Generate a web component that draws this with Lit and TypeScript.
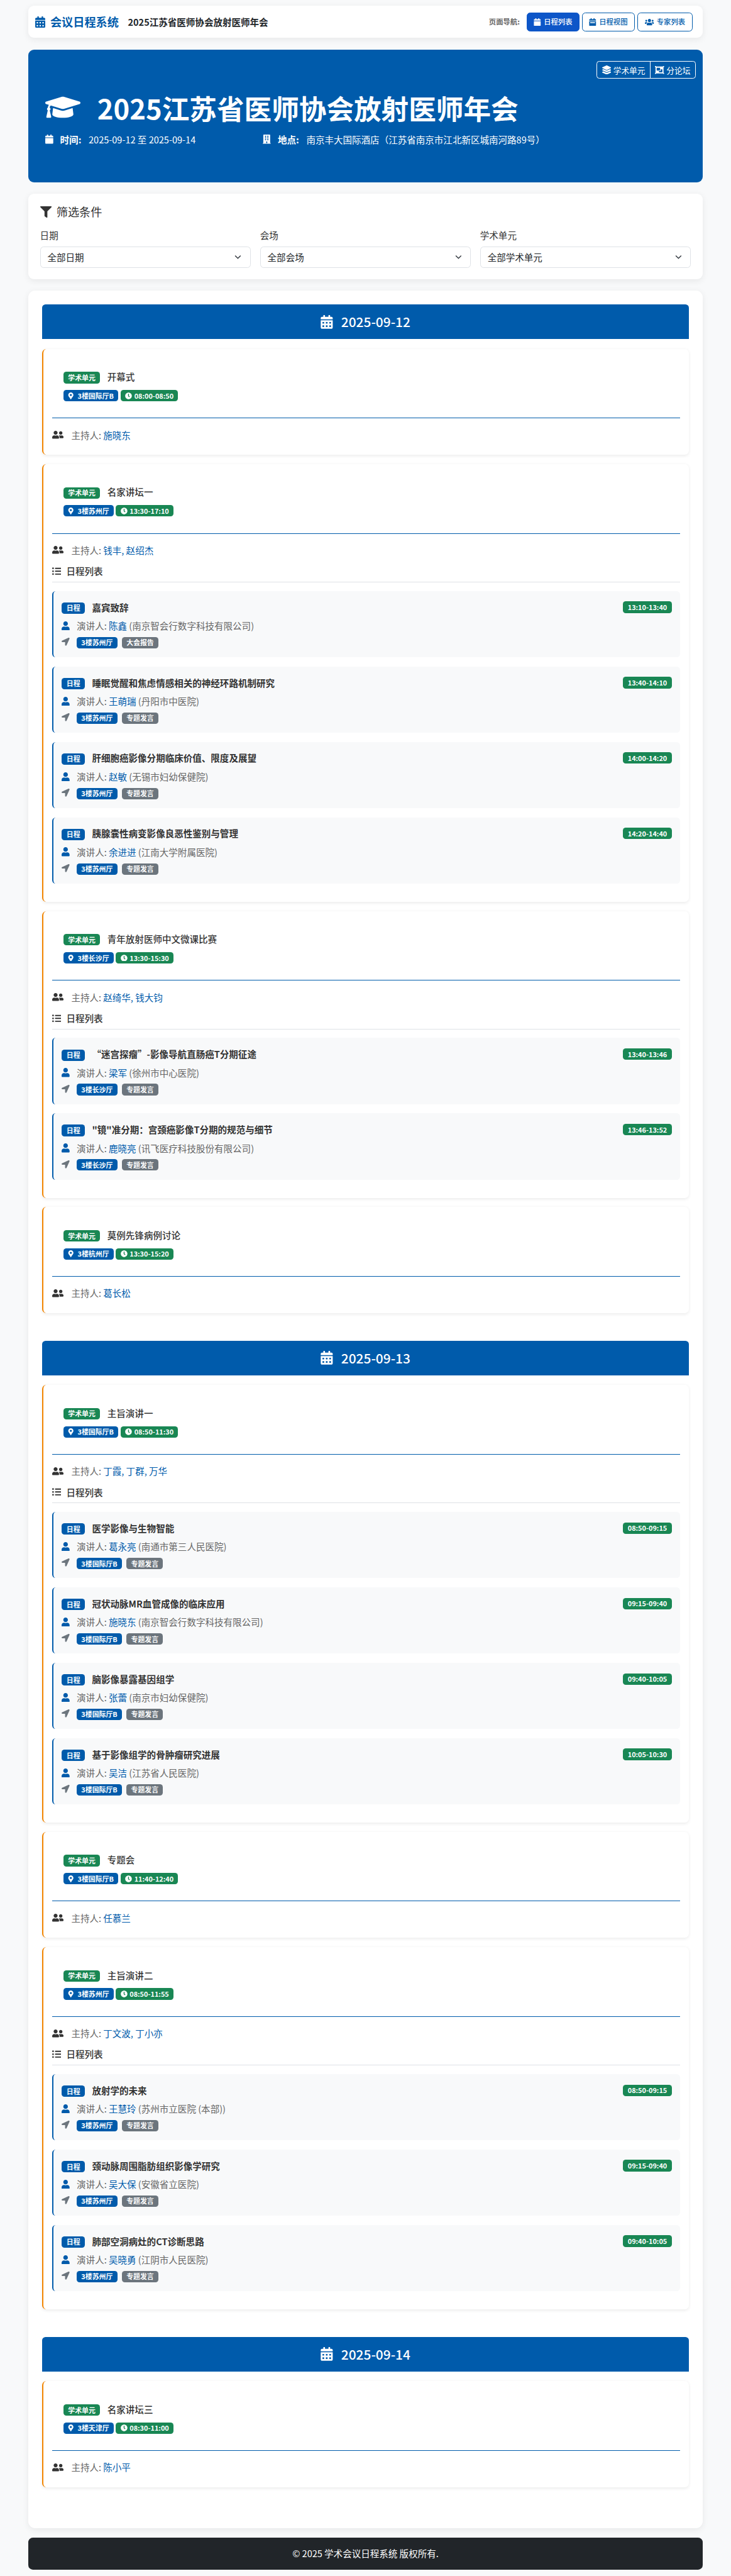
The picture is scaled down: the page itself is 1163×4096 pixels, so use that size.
import { LitElement, html, css } from "lit";
import { customElement } from "lit/decorators.js";

const P: Record<string, [string, string]> = {
  calAlt: ["0 0 448 512", "M0 464c0 26.5 21.5 48 48 48h352c26.5 0 48-21.5 48-48V192H0v272zm320-196c0-6.6 5.4-12 12-12h40c6.6 0 12 5.4 12 12v40c0 6.6-5.4 12-12 12h-40c-6.6 0-12-5.4-12-12v-40zm0 128c0-6.6 5.4-12 12-12h40c6.6 0 12 5.4 12 12v40c0 6.6-5.4 12-12 12h-40c-6.6 0-12-5.4-12-12v-40zM192 268c0-6.6 5.4-12 12-12h40c6.6 0 12 5.4 12 12v40c0 6.6-5.4 12-12 12h-40c-6.6 0-12-5.4-12-12v-40zm0 128c0-6.6 5.4-12 12-12h40c6.6 0 12 5.4 12 12v40c0 6.6-5.4 12-12 12h-40c-6.6 0-12-5.4-12-12v-40zM64 268c0-6.6 5.4-12 12-12h40c6.6 0 12 5.4 12 12v40c0 6.6-5.4 12-12 12H76c-6.6 0-12-5.4-12-12v-40zm0 128c0-6.6 5.4-12 12-12h40c6.6 0 12 5.4 12 12v40c0 6.6-5.4 12-12 12H76c-6.6 0-12-5.4-12-12v-40zM400 64h-48V16c0-8.8-7.2-16-16-16h-32c-8.8 0-16 7.2-16 16v48H160V16c0-8.8-7.2-16-16-16h-32c-8.8 0-16 7.2-16 16v48H48C21.5 64 0 85.5 0 112v48h448v-48c0-26.5-21.5-48-48-48z"],
  cal: ["0 0 448 512", "M12 192h424c6.6 0 12 5.4 12 12v260c0 26.5-21.5 48-48 48H48c-26.5 0-48-21.5-48-48V204c0-6.6 5.4-12 12-12zm436-44v-36c0-26.5-21.5-48-48-48h-48V12c0-6.6-5.4-12-12-12h-40c-6.6 0-12 5.4-12 12v52H160V12c0-6.6-5.4-12-12-12h-40c-6.6 0-12 5.4-12 12v52H48C21.5 64 0 85.5 0 112v36c0 6.6 5.4 12 12 12h424c6.6 0 12-5.4 12-12z"],
  calWeek: ["0 0 448 512", "M448 148v-36c0-26.5-21.5-48-48-48h-48V12c0-6.6-5.4-12-12-12h-40c-6.6 0-12 5.4-12 12v52H160V12c0-6.6-5.4-12-12-12h-40c-6.6 0-12 5.4-12 12v52H48C21.5 64 0 85.5 0 112v36c0 6.6 5.4 12 12 12h424c6.6 0 12-5.4 12-12zM0 192v272c0 26.5 21.5 48 48 48h352c26.5 0 48-21.5 48-48V192H0zm384 128H64v-64h320v64z"],
  cap: ["0 0 640 512", "M622.34 153.2L343.4 67.5c-15.2-4.67-31.6-4.67-46.79 0L17.66 153.2c-23.54 7.23-23.54 38.36 0 45.59l48.63 14.94c-10.67 13.19-17.23 29.28-17.88 46.9C38.78 266.15 32 276.11 32 288c0 10.78 5.68 19.85 13.86 25.65L20.33 428.53C18.11 438.52 25.71 448 35.94 448h56.11c10.24 0 17.84-9.48 15.62-19.47L82.14 313.65C90.32 307.85 96 298.78 96 288c0-11.57-6.47-21.25-15.66-26.87.76-15.02 8.44-28.3 20.69-36.72L296.6 284.5c9.06 2.78 26.44 6.25 46.79 0l278.95-85.7c23.55-7.24 23.55-38.36 0-45.6zM352.79 315.09c-28.53 8.76-52.84 3.92-65.59 0l-145.02-44.55L128 384c0 35.35 85.96 64 192 64s192-28.65 192-64l-14.18-113.47-145.03 44.56z"],
  user: ["0 0 448 512", "M224 256c70.7 0 128-57.3 128-128S294.7 0 224 0 96 57.3 96 128s57.3 128 128 128zm89.6 32h-16.7c-22.2 10.2-46.9 16-72.9 16s-50.6-5.8-72.9-16h-16.7C60.2 288 0 348.2 0 422.4V464c0 26.5 21.5 48 48 48h352c26.5 0 48-21.5 48-48v-41.6c0-74.2-60.2-134.4-134.4-134.4z"],
  friends: ["0 0 640 512", "M192 256c61.9 0 112-50.1 112-112S253.9 32 192 32 80 82.1 80 144s50.1 112 112 112zm76.8 32h-8.3c-20.8 10-43.9 16-68.5 16s-47.6-6-68.5-16h-8.3C51.6 288 0 339.6 0 403.2V432c0 26.5 21.5 48 48 48h288c26.5 0 48-21.5 48-48v-28.8c0-63.6-51.6-115.2-115.2-115.2zM480 256c53 0 96-43 96-96s-43-96-96-96-96 43-96 96 43 96 96 96zm48 32h-3.8c-13.9 4.8-28.6 8-44.2 8s-30.3-3.2-44.2-8H432c-20.4 0-39.2 5.9-55.7 15.4 24.4 26.3 39.7 61.2 39.7 99.8v38.4c0 2.2-.5 4.3-.6 6.4H592c26.5 0 48-21.5 48-48 0-61.9-50.1-112-112-112z"],
  users: ["0 0 640 512", "M96 224c35.3 0 64-28.7 64-64s-28.7-64-64-64-64 28.7-64 64 28.7 64 64 64zm448 0c35.3 0 64-28.7 64-64s-28.7-64-64-64-64 28.7-64 64 28.7 64 64 64zm32 32h-64c-17.6 0-33.5 7.1-45.1 18.6 40.3 22.1 68.9 62 75.1 109.4h66c17.7 0 32-14.3 32-32v-32c0-35.3-28.7-64-64-64zm-256 0c61.9 0 112-50.1 112-112S381.9 32 320 32 208 82.1 208 144s50.1 112 112 112zm76.8 32h-8.3c-20.8 10-43.9 16-68.5 16s-47.6-6-68.5-16h-8.3C179.6 288 128 339.6 128 403.2V432c0 26.5 21.5 48 48 48h288c26.5 0 48-21.5 48-48v-28.8c0-63.6-51.6-115.2-115.2-115.2zm-223.7-13.4C161.5 263.1 145.6 256 128 256H64c-35.3 0-64 28.7-64 64v32c0 17.7 14.3 32 32 32h65.9c6.3-47.4 34.9-87.3 75.2-109.4z"],
  filter: ["0 0 512 512", "M487.976 0H24.028C2.71 0-8.047 25.866 7.058 40.971L192 225.941V432c0 7.831 3.821 15.17 10.237 19.662l80 55.98C298.02 518.69 320 507.493 320 487.98V225.941l184.947-184.97C520.021 25.896 509.338 0 487.976 0z"],
  marker: ["0 0 384 512", "M172.268 501.67C26.97 291.031 0 256.528 0 192 0 85.961 85.961 0 192 0s192 85.961 192 192c0 64.528-26.97 99.031-172.268 309.67-9.535 13.774-29.93 13.773-39.464 0zM192 272c44.183 0 80-35.817 80-80s-35.817-80-80-80-80 35.817-80 80 35.817 80 80 80z"],
  clock: ["0 0 512 512", "M256,8C119,8,8,119,8,256S119,504,256,504,504,393,504,256,393,8,256,8Zm92.49,313h0l-20,25a16,16,0,0,1-22.49,2.5h0l-67-49.72a40,40,0,0,1-15-31.23V112a16,16,0,0,1,16-16h32a16,16,0,0,1,16,16V256l58,42.5A16,16,0,0,1,348.49,321Z"],
  arrow: ["0 0 512 512", "M444.52 3.52L28.74 195.42c-47.97 22.39-31.98 92.75 19.19 92.75h175.91v175.91c0 51.17 70.36 67.17 92.75 19.19l191.9-415.78c15.99-38.39-25.59-79.97-63.97-63.97z"],
  list: ["0 0 512 512", "M48 48a48 48 0 1 0 48 48 48 48 0 0 0-48-48zm0 160a48 48 0 1 0 48 48 48 48 0 0 0-48-48zm0 160a48 48 0 1 0 48 48 48 48 0 0 0-48-48zm448 16H176a16 16 0 0 0-16 16v32a16 16 0 0 0 16 16h320a16 16 0 0 0 16-16v-32a16 16 0 0 0-16-16zm0-320H176a16 16 0 0 0-16 16v32a16 16 0 0 0 16 16h320a16 16 0 0 0 16-16V80a16 16 0 0 0-16-16zm0 160H176a16 16 0 0 0-16 16v32a16 16 0 0 0 16 16h320a16 16 0 0 0 16-16v-32a16 16 0 0 0-16-16z"],
  building: ["0 0 448 512", "M436 480h-20V24c0-13.255-10.745-24-24-24H56C42.745 0 32 10.745 32 24v456H12c-6.627 0-12 5.373-12 12v20h448v-20c0-6.627-5.373-12-12-12zM128 76c0-6.627 5.373-12 12-12h40c6.627 0 12 5.373 12 12v40c0 6.627-5.373 12-12 12h-40c-6.627 0-12-5.373-12-12V76zm0 96c0-6.627 5.373-12 12-12h40c6.627 0 12 5.373 12 12v40c0 6.627-5.373 12-12 12h-40c-6.627 0-12-5.373-12-12v-40zm52 148h-40c-6.627 0-12-5.373-12-12v-40c0-6.627 5.373-12 12-12h40c6.627 0 12 5.373 12 12v40c0 6.627-5.373 12-12 12zm76 160h-64v-84c0-6.627 5.373-12 12-12h40c6.627 0 12 5.373 12 12v84zm64-172c0 6.627-5.373 12-12 12h-40c-6.627 0-12-5.373-12-12v-40c0-6.627 5.373-12 12-12h40c6.627 0 12 5.373 12 12v40zm0-96c0 6.627-5.373 12-12 12h-40c-6.627 0-12-5.373-12-12v-40c0-6.627 5.373-12 12-12h40c6.627 0 12 5.373 12 12v40zm0-96c0 6.627-5.373 12-12 12h-40c-6.627 0-12-5.373-12-12V76c0-6.627 5.373-12 12-12h40c6.627 0 12 5.373 12 12v40z"],
  layers: ["0 0 512 512", "M12.41 148.02l232.94 105.67c6.8 3.09 14.49 3.09 21.29 0l232.94-105.67c16.55-7.51 16.55-32.52 0-40.03L266.65 2.31a25.607 25.607 0 0 0-21.29 0L12.41 107.98c-16.55 7.51-16.55 32.53 0 40.04zm487.18 88.28l-58.09-26.33-161.64 73.27c-7.56 3.43-15.59 5.17-23.86 5.17s-16.29-1.74-23.86-5.17L70.51 209.97l-58.1 26.33c-16.55 7.5-16.55 32.5 0 40l232.94 105.59c6.8 3.08 14.49 3.08 21.29 0L499.59 276.3c16.55-7.5 16.55-32.5 0-40zm0 127.8l-57.87-26.23-161.86 73.37c-7.56 3.43-15.59 5.17-23.86 5.17s-16.29-1.74-23.86-5.17L70.29 337.87 12.41 364.1c-16.55 7.5-16.55 32.5 0 40l232.94 105.59c6.8 3.08 14.49 3.08 21.29 0L499.59 404.1c16.55-7.5 16.55-32.5 0-40z"],
  objects: ["0 0 512 512", "M480 128V96h20c6.627 0 12-5.373 12-12V44c0-6.627-5.373-12-12-12h-40c-6.627 0-12 5.373-12 12v20H64V44c0-6.627-5.373-12-12-12H12C5.373 32 0 37.373 0 44v40c0 6.627 5.373 12 12 12h20v320H12c-6.627 0-12 5.373-12 12v40c0 6.627 5.373 12 12 12h40c6.627 0 12-5.373 12-12v-20h384v20c0 6.627 5.373 12 12 12h40c6.627 0 12-5.373 12-12v-40c0-6.627-5.373-12-12-12h-20V128zM96 276V140c0-6.627 5.373-12 12-12h168c6.627 0 12 5.373 12 12v136c0 6.627-5.373 12-12 12H108c-6.627 0-12-5.373-12-12zm320 96c0 6.627-5.373 12-12 12H236c-6.627 0-12-5.373-12-12v-52h72c13.255 0 24-10.745 24-24v-72h84c6.627 0 12 5.373 12 12v136z"],
};

const ic = (n: string, cls = "") => html`<svg class="ic ${cls}" viewBox=${P[n][0]} aria-hidden="true"><path d=${P[n][1]}></path></svg>`;

type Item = { t: string; time: string; who: string; org: string; kind: string };
type Session = { t: string; room: string; time: string; hosts: string; items?: Item[] };
type Day = { date: string; sessions: Session[] };

const TALK = "专题发言";
const DAYS: Day[] = [
  { date: "2025-09-12", sessions: [
    { t: "开幕式", room: "3楼国际厅B", time: "08:00-08:50", hosts: "施晓东" },
    { t: "名家讲坛一", room: "3楼苏州厅", time: "13:30-17:10", hosts: "钱丰, 赵绍杰", items: [
      { t: "嘉宾致辞", time: "13:10-13:40", who: "陈鑫", org: "南京智会行数字科技有限公司", kind: "大会报告" },
      { t: "睡眠觉醒和焦虑情感相关的神经环路机制研究", time: "13:40-14:10", who: "王萌瑞", org: "丹阳市中医院", kind: TALK },
      { t: "肝细胞癌影像分期临床价值、限度及展望", time: "14:00-14:20", who: "赵敏", org: "无锡市妇幼保健院", kind: TALK },
      { t: "胰腺囊性病变影像良恶性鉴别与管理", time: "14:20-14:40", who: "余进进", org: "江南大学附属医院", kind: TALK },
    ] },
    { t: "青年放射医师中文微课比赛", room: "3楼长沙厅", time: "13:30-15:30", hosts: "赵绮华, 钱大钧", items: [
      { t: "“迷宫探瘤”-影像导航直肠癌T分期征途", time: "13:40-13:46", who: "梁军", org: "徐州市中心医院", kind: TALK },
      { t: "\"镜\"准分期：宫颈癌影像T分期的规范与细节", time: "13:46-13:52", who: "鹿晓亮", org: "讯飞医疗科技股份有限公司", kind: TALK },
    ] },
    { t: "莫例先锋病例讨论", room: "3楼杭州厅", time: "13:30-15:20", hosts: "葛长松" },
  ] },
  { date: "2025-09-13", sessions: [
    { t: "主旨演讲一", room: "3楼国际厅B", time: "08:50-11:30", hosts: "丁霞, 丁群, 万华", items: [
      { t: "医学影像与生物智能", time: "08:50-09:15", who: "葛永亮", org: "南通市第三人民医院", kind: TALK },
      { t: "冠状动脉MR血管成像的临床应用", time: "09:15-09:40", who: "施晓东", org: "南京智会行数字科技有限公司", kind: TALK },
      { t: "脑影像暴露基因组学", time: "09:40-10:05", who: "张蕾", org: "南京市妇幼保健院", kind: TALK },
      { t: "基于影像组学的骨肿瘤研究进展", time: "10:05-10:30", who: "吴洁", org: "江苏省人民医院", kind: TALK },
    ] },
    { t: "专题会", room: "3楼国际厅B", time: "11:40-12:40", hosts: "任慕兰" },
    { t: "主旨演讲二", room: "3楼苏州厅", time: "08:50-11:55", hosts: "丁文波, 丁小亦", items: [
      { t: "放射学的未来", time: "08:50-09:15", who: "王慧玲", org: "苏州市立医院 (本部)", kind: TALK },
      { t: "颈动脉周围脂肪组织影像学研究", time: "09:15-09:40", who: "吴大保", org: "安徽省立医院", kind: TALK },
      { t: "肺部空洞病灶的CT诊断思路", time: "09:40-10:05", who: "吴晓勇", org: "江阴市人民医院", kind: TALK },
    ] },
  ] },
  { date: "2025-09-14", sessions: [
    { t: "名家讲坛三", room: "3楼天津厅", time: "08:30-11:00", hosts: "陈小平" },
  ] },
];

@customElement("app-root")
export class AppRoot extends LitElement {
  static styles = css`
    :host {
      display: block;
      zoom: 0.727;
      background: #f8f9fa;
      color: #333;
      font-family: "Noto Sans CJK SC", "Noto Sans", sans-serif;
      font-size: 20px;
      line-height: 1.5;
    }
    * { box-sizing: border-box; }
    .page { padding: 13px 62.5px 16px; }
    .ic { display: block; fill: currentColor; flex: none; }
    .white { background: #fff; border-radius: 12.5px; box-shadow: 0 3px 14px rgba(0,0,0,.07); }

    .nav { height: 70px; display: flex; align-items: center; padding: 0 21px 0 14.5px; margin-bottom: 26px; }
    .brand { display: flex; align-items: center; color: #005bab; font-size: 25px; font-weight: 700; }
    .brand .ic { width: 22px; height: 25px; margin-right: 11px; }
    .sub { margin-left: 20px; font-size: 20px; font-weight: 700; color: #212529; }
    .navr { margin-left: auto; display: flex; align-items: center; }
    .navl { font-size: 15.6px; font-weight: 700; color: #666; margin-right: 15px; }
    .btn { height: 42px; width: 116px; margin-left: 5px; display: flex; align-items: center; justify-content: center; border: 1.25px solid #005bab; border-radius: 7.5px; color: #005bab; font-size: 15.6px; font-weight: 500; }
    .btn .ic { width: 16px; height: 17px; margin-right: 6px; }
    .btn.on { background: #0d56c8; border-color: #0d56c8; color: #fff; }
    .btn.wide { width: 122px; }
    .btn.wide .ic { width: 20px; }
    .navl + .btn { margin-left: 0; }

    .hero { position: relative; height: 290px; background: #005bab; color: #fff; border-radius: 12.5px; padding: 90px 36.5px 0; margin-bottom: 25px; }
    .htitle { display: flex; align-items: center; height: 72px; font-size: 60px; font-weight: 700; line-height: 1.2; margin: 0 0 19px; }
    .htitle .ic { width: 77px; height: 62px; margin-right: 37px; }
    .hmeta { display: flex; height: 30px; align-items: center; }
    .hmeta > div { display: flex; align-items: center; }
    .hmeta > div:first-child { width: 476.5px; }
    .hmeta .ic { width: 17.5px; height: 20px; margin-right: 15px; }
    .hmeta b { margin-right: 16px; font-weight: 700; }
    .tag { position: absolute; top: 25px; right: 15px; display: flex; height: 38px; border: 1.25px solid #fff; border-radius: 6px; font-size: 17.5px; color: #fff; }
    .tag span { display: flex; align-items: center; padding: 0 10px; }
    .tag span + span { border-left: 1.25px solid #fff; }
    .tag .ic { width: 20px; height: 20px; margin-right: 5px; }

    .filter { height: 187px; padding: 21px 25px 0; margin-bottom: 25px; }
    .ftitle { display: flex; align-items: center; font-size: 25px; height: 37.5px; margin-bottom: 17.5px; }
    .ftitle .ic { width: 25px; height: 25px; margin-right: 11px; }
    .fgrid { display: grid; grid-template-columns: repeat(3, 1fr); gap: 20px; }
    .flabel { height: 30px; margin-bottom: 9px; }
    .sel { height: 47px; display: flex; align-items: center; justify-content: space-between; padding: 0 19px 0 15px; border: 1.25px solid #dee2e6; border-radius: 7.5px; color: #212529; }
    .chev { width: 15px; height: 10px; fill: none; stroke: #343a40; stroke-width: 2; flex: none; }

    .sched { padding: 30px; border-radius: 15px; margin-bottom: 20px; }
    .day { padding-bottom: 40px; }
    .dhead { height: 76px; background: #005bab; color: #fff; border-radius: 7.5px 7.5px 0 0; display: flex; align-items: center; justify-content: center; font-size: 28.75px; font-weight: 500; margin-bottom: 21px; }
    .dhead .ic { width: 27px; height: 30px; margin-right: 18px; }

    .sess { background: #fff; border-left: 3.75px solid #f28500; border-radius: 9px; box-shadow: 0 2px 8px rgba(0,0,0,.08); padding: 18.75px; margin-bottom: 20px; }
    .shead { padding: 31.25px 0 35px 25px; border-bottom: 1.25px solid #005bab; }
    .sline { display: flex; align-items: center; height: 26px; margin-bottom: 14px; }
    .stitle { margin-left: 16px; font-size: 20px; font-weight: 500; color: #333; line-height: 26px; position: relative; top: -1px; }
    .badges { display: flex; height: 26px; gap: 5px; }
    .b { display: inline-flex; align-items: center; height: 25px; padding: 0 10px; border-radius: 6.25px; color: #fff; font-size: 15px; font-weight: 700; line-height: 1; white-space: nowrap; }
    .b.g { background: #198754; }
    .b.bl { background: #005bab; }
    .b.gr { background: #6c757d; }
    .b .ic { width: 13px; height: 15px; margin-right: 8px; }
    .b .ic.ck { width: 15px; margin-right: 5px; }
    .host { display: flex; align-items: center; height: 30px; margin: 21px 0 10px; color: #666; }
    .host .ic { width: 25px; height: 20px; margin-right: 17px; color: #333; }
    .nm { color: #005bab; }
    .ltitle { display: flex; align-items: center; height: 30px; font-weight: 500; }
    .lwrap { padding-bottom: 8px; border-bottom: 1.25px solid #dee2e6; margin: 16px 0 19px; }
    .ltitle .ic { width: 20px; height: 20px; margin-right: 11px; }
    .items { padding-bottom: 1.25px; }

    .item { height: 145px; background: #f8f9fa; border-left: 3.75px solid #005bab; border-radius: 7.5px; padding: 19.5px 18.75px; margin-bottom: 20px; }
    .irow { display: flex; align-items: center; height: 32px; margin-bottom: 9.5px; }
    .irow .b { margin-top: 4px; }
    .ititle { margin-left: 16px; font-weight: 700; color: #333; }
    .irow .b.g { margin-left: auto; margin-top: 0; }
    .spk { display: flex; align-items: center; height: 30px; margin-bottom: 9.5px; color: #666; }
    .spk .ic { width: 17.5px; height: 20px; margin-right: 15px; color: #005bab; }
    .tags { display: flex; align-items: center; height: 25px; }
    .tags > .ic { width: 17.5px; height: 20px; margin-right: 15px; color: #6c757d; margin-top: -4px; }
    .tags .b { margin-right: 10px; }

    .foot { height: 70px; background: #212529; color: #fff; border-radius: 10px; display: flex; align-items: center; justify-content: center; }
  `;

  private session(s: Session) {
    return html`<section class="sess">
      <div class="shead">
        <div class="sline"><span class="b g">学术单元</span><span class="stitle">${s.t}</span></div>
        <div class="badges">
          <span class="b bl">${ic("marker")}${s.room}</span>
          <span class="b g">${ic("clock", "ck")}${s.time}</span>
        </div>
      </div>
      <div class="host">${ic("friends")}<span>主持人: <span class="nm">${s.hosts}</span></span></div>
      ${s.items
        ? html`<div class="lwrap"><div class="ltitle">${ic("list")}日程列表</div></div>
            <div class="items">${s.items.map((i) => this.item(i, s.room))}</div>`
        : ""}
    </section>`;
  }

  private item(i: Item, room: string) {
    return html`<article class="item">
      <div class="irow"><span class="b bl">日程</span><span class="ititle">${i.t}</span><span class="b g">${i.time}</span></div>
      <div class="spk">${ic("user")}<span>演讲人: <span class="nm">${i.who}</span> (${i.org})</span></div>
      <div class="tags">${ic("arrow")}<span class="b bl">${room}</span><span class="b gr">${i.kind}</span></div>
    </article>`;
  }

  render() {
    return html`<div class="page">
      <header class="nav white">
        <div class="brand">${ic("calAlt")}会议日程系统</div>
        <div class="sub">2025江苏省医师协会放射医师年会</div>
        <div class="navr">
          <span class="navl">页面导航:</span>
          <span class="btn on">${ic("cal")}日程列表</span>
          <span class="btn">${ic("calWeek")}日程视图</span>
          <span class="btn wide">${ic("users")}专家列表</span>
        </div>
      </header>

      <section class="hero">
        <div class="tag"><span>${ic("layers")}学术单元</span><span>${ic("objects")}分论坛</span></div>
        <h1 class="htitle">${ic("cap")}2025江苏省医师协会放射医师年会</h1>
        <div class="hmeta">
          <div>${ic("cal")}<b>时间:</b>2025-09-12 至 2025-09-14</div>
          <div>${ic("building")}<b>地点:</b>南京丰大国际酒店（江苏省南京市江北新区城南河路89号）</div>
        </div>
      </section>

      <section class="filter white">
        <div class="ftitle">${ic("filter")}筛选条件</div>
        <div class="fgrid">
          ${[["日期", "全部日期"], ["会场", "全部会场"], ["学术单元", "全部学术单元"]].map(
            ([l, v]) => html`<div>
              <div class="flabel">${l}</div>
              <div class="sel">${v}<svg class="chev" viewBox="0 0 15 10"><path d="M1.5 2l6 6 6-6"></path></svg></div>
            </div>`
          )}
        </div>
      </section>

      <main class="sched white">
        ${DAYS.map(
          (d) => html`<div class="day">
            <div class="dhead">${ic("calAlt")}${d.date}</div>
            ${d.sessions.map((s) => this.session(s))}
          </div>`
        )}
      </main>

      <footer class="foot">© 2025 学术会议日程系统 版权所有.</footer>
    </div>`;
  }
}
